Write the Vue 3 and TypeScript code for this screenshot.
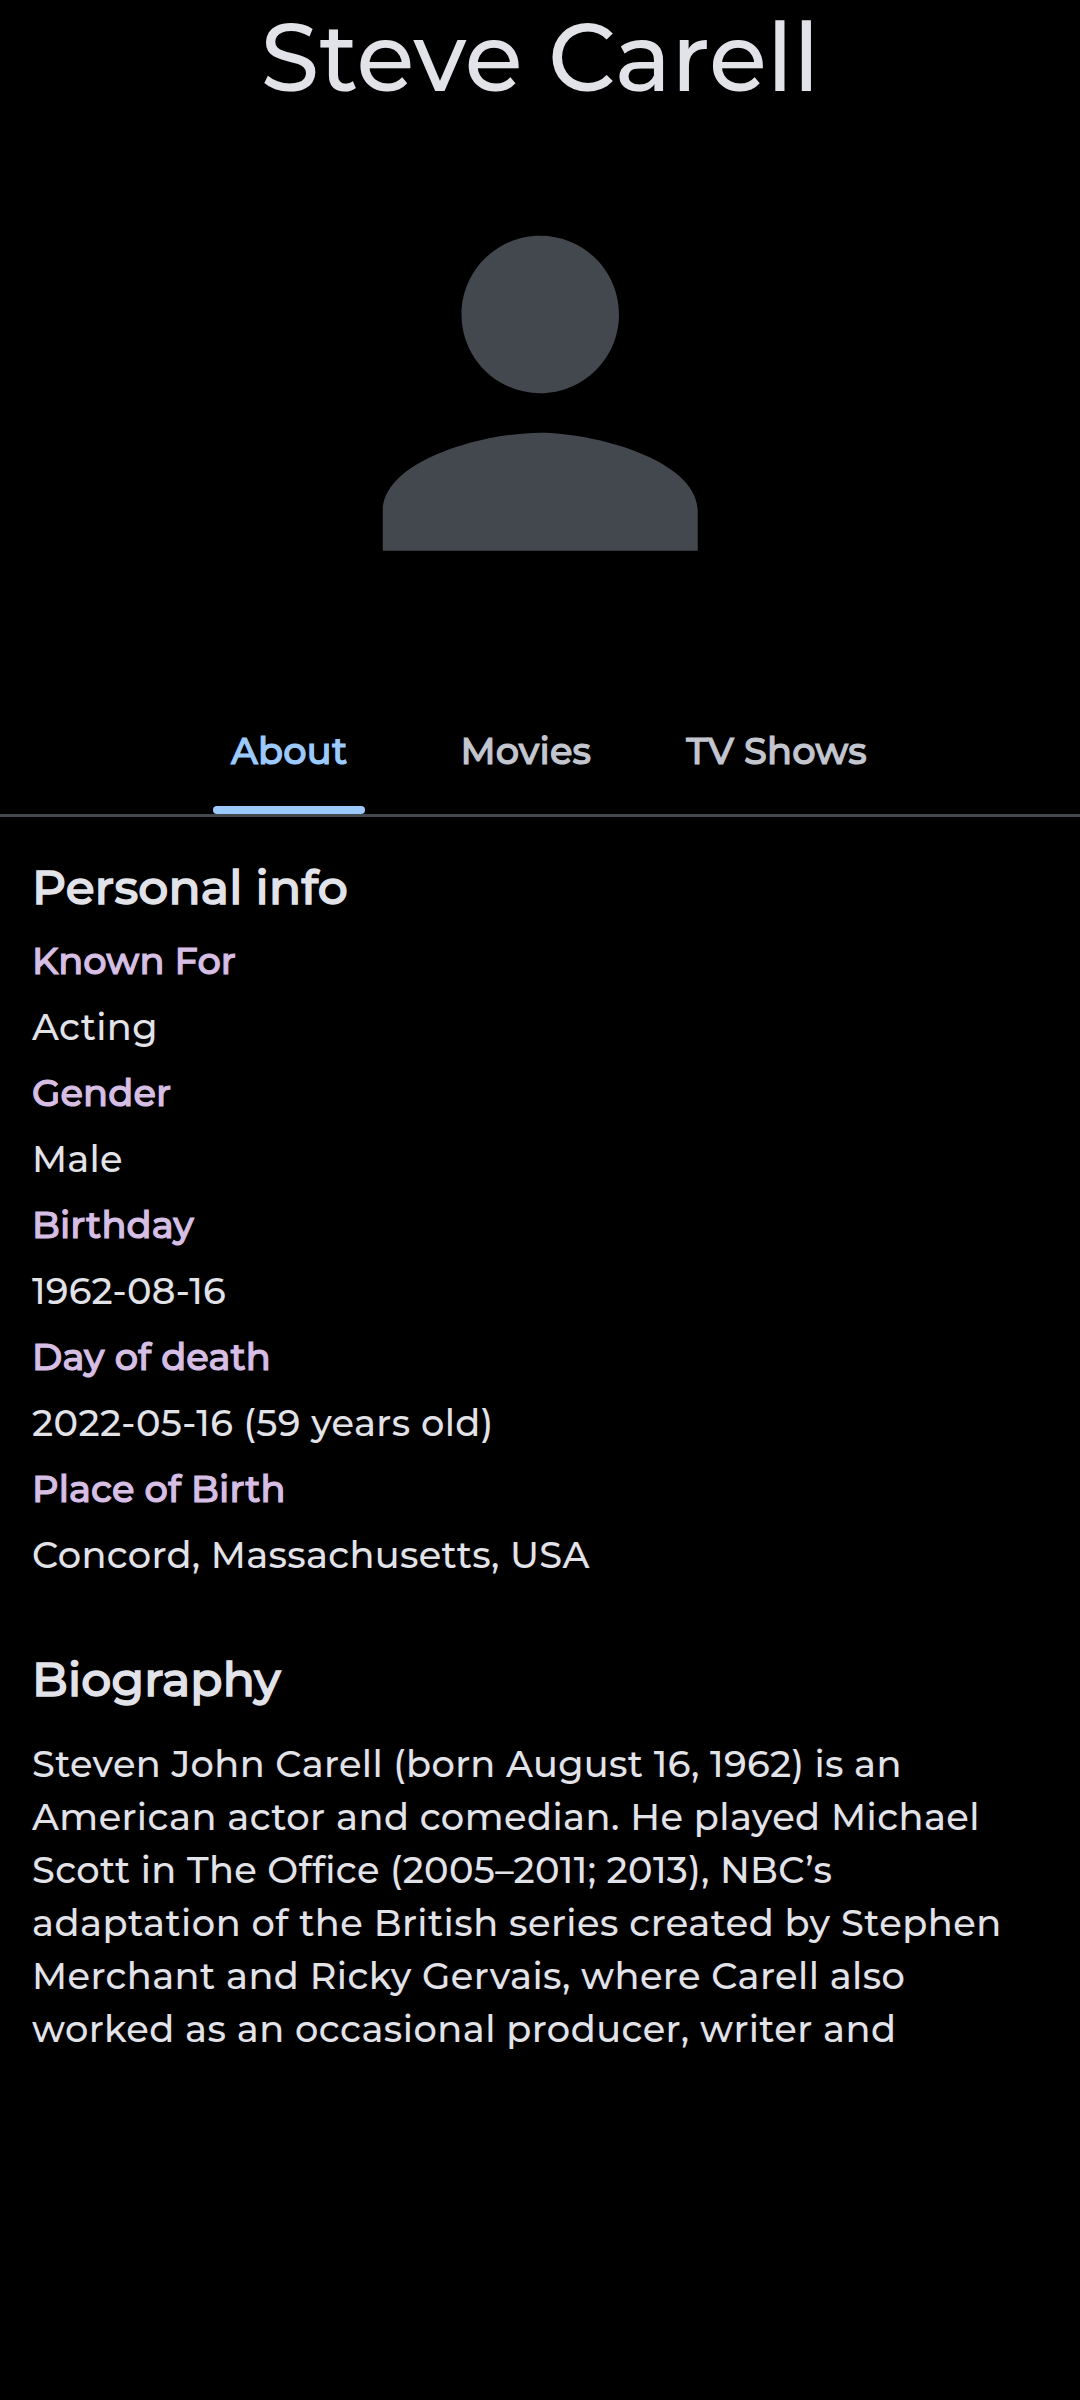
<script setup lang="ts">
import { ref } from 'vue'

interface Line {
  text: string
  spacing: number
}

interface Fact {
  label: string
  value: Line
}

const activeTab = ref(0)

const tabs: string[] = ['About', 'Movies', 'TV Shows']

const facts: Fact[] = [
  { label: 'Known For', value: { text: 'Acting', spacing: 0.35 } },
  { label: 'Gender', value: { text: 'Male', spacing: 0.2 } },
  { label: 'Birthday', value: { text: '1962-08-16', spacing: 0.2 } },
  { label: 'Day of death', value: { text: '2022-05-16 (59 years old)', spacing: 0.41 } },
  { label: 'Place of Birth', value: { text: 'Concord, Massachusetts, USA', spacing: 0.34 } },
]

const biography: Line[] = [
  { text: 'Steven John Carell (born August 16, 1962) is an', spacing: 0.36 },
  { text: 'American actor and comedian. He played Michael', spacing: 0.45 },
  { text: 'Scott in The Office (2005–2011; 2013), NBC’s', spacing: 0.35 },
  { text: 'adaptation of the British series created by Stephen', spacing: 0.48 },
  { text: 'Merchant and Ricky Gervais, where Carell also', spacing: 0.43 },
  { text: 'worked as an occasional producer, writer and', spacing: 0.46 },
]
</script>

<template>
  <main class="screen">
    <h1 class="name">Steve Carell</h1>

    <div class="portrait">
      <svg class="person" viewBox="0 0 24 24" aria-hidden="true">
        <path
          d="M12 12c2.21 0 4-1.79 4-4s-1.79-4-4-4-4 1.79-4 4 1.79 4 4 4zm0 2c-2.67 0-8 1.34-8 4v2h16v-2c0-2.66-5.33-4-8-4z"
        />
      </svg>
    </div>

    <nav class="tabs">
      <a
        v-for="(tab, i) in tabs"
        :key="tab"
        class="tab strong"
        :class="{ active: i === activeTab }"
        @click="activeTab = i"
        >{{ tab }}</a
      >
    </nav>

    <section class="info">
      <h2 class="heading">Personal info</h2>
      <dl class="facts">
        <template v-for="fact in facts" :key="fact.label">
          <dt class="label strong">{{ fact.label }}</dt>
          <dd class="value" :style="{ letterSpacing: `${fact.value.spacing}px` }">
            {{ fact.value.text }}
          </dd>
        </template>
      </dl>
    </section>

    <section class="bio">
      <h2 class="heading">Biography</h2>
      <p class="bio-text">
        <span
          v-for="line in biography"
          :key="line.text"
          class="line"
          :style="{ letterSpacing: `${line.spacing}px` }"
          >{{ line.text }}</span
        >
      </p>
    </section>
  </main>
</template>

<style>
body {
  margin: 0;
  background: #000;
}
</style>

<style scoped>
.screen {
  box-sizing: border-box;
  width: 1080px;
  height: 2400px;
  overflow: hidden;
  background: #000;
  color: #e2e2e9;
  font-family: Montserrat, Inter, sans-serif;
  font-size: 36.75px;
  font-weight: 500;
}

.name {
  margin: 0;
  font-size: 94.5px;
  font-weight: 500;
  line-height: 116px;
  text-align: center;
  white-space: nowrap;
}

.portrait {
  display: flex;
  justify-content: center;
  height: 532px;
  padding-top: 41px;
}

.person {
  width: 472.5px;
  height: 472.5px;
  fill: #43474e;
}

.tabs {
  display: grid;
  grid-template-columns: 229.5px 225.7px auto;
  padding-left: 213px;
  height: 125px;
  border-bottom: 3px solid #43474e;
}

.tab {
  position: relative;
  padding-left: 18px;
  color: #c3c6cf;
  line-height: 123px;
  letter-spacing: 0.18px;
  white-space: nowrap;
}

.tab.active {
  color: #9ccaff;
}

.tab.active::after {
  content: '';
  position: absolute;
  left: 0;
  bottom: 0;
  width: 152px;
  height: 8px;
  border-radius: 4px;
  background: #9ccaff;
}

.strong {
  -webkit-text-stroke: 1.15px currentColor;
}

.info {
  padding: 37px 32px 0;
}

.heading {
  margin: 0;
  font-size: 47.25px;
  font-weight: 500;
  line-height: 66px;
  letter-spacing: 0.2px;
  -webkit-text-stroke: 1.48px currentColor;
}

.facts {
  margin: 8px 0 0;
}

.label,
.value {
  margin: 0;
  white-space: nowrap;
}

.label {
  color: #d6bee4;
  line-height: 65px;
  letter-spacing: 0.12px;
}

.value {
  line-height: 67px;
}

.bio {
  padding: 58px 32px 0;
}

.bio-text {
  margin: 25px 0 0;
  line-height: 53px;
}

.line {
  display: block;
  white-space: nowrap;
}
</style>
